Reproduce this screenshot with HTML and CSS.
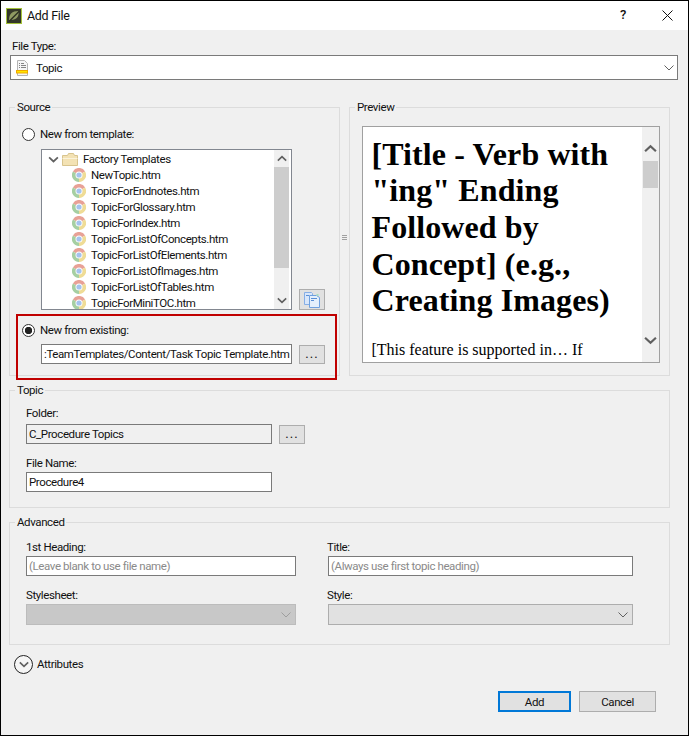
FILE: index.html
```html
<!DOCTYPE html>
<html lang="en">
<head>
<meta charset="utf-8">
<title>Add File</title>
<link rel="stylesheet" href="styles.css">
</head>
<body>
<svg class="defs" width="0" height="0">
  <symbol id="chrome" viewBox="0 0 14 14">
    <path d="M7 7 .9 3.500A7 7 0 0 1 13.100 3.500z" fill="#e8a196"/>
    <path d="M7 7 13.100 3.500A7 7 0 0 1 7 14z" fill="#efdc96"/>
    <path d="M7 7 7 14A7 7 0 0 1 .9 3.500z" fill="#a6cfa2"/>
    <circle cx="7" cy="7" r="3.500" fill="#fdfdfd"/>
    <circle cx="7" cy="7" r="2.600" fill="#a4c3ee"/>
  </symbol>
  <symbol id="chev" viewBox="0 0 12 8">
    <path d="M1 6.500 6 1.800l5 4.700" fill="none" stroke="#606060" stroke-width="2"/>
  </symbol>
  <symbol id="chevd" viewBox="0 0 12 8">
    <path d="M1 1.500 6 6.200l5-4.700" fill="none" stroke="#606060" stroke-width="2"/>
  </symbol>
  <symbol id="thin" viewBox="0 0 10 6">
    <path d="M.5.500 5 5 9.500.5" fill="none" stroke="#606060"/>
  </symbol>
</svg>
<div class="window">
  <header class="titlebar">
    <svg class="appicon" width="16" height="16" viewBox="0 0 16 16">
      <rect x=".5" y=".5" width="15" height="15" fill="#35382a" stroke="#a4c23a"/>
      <path d="M3 12C3 6 6 3 12.500 3c.8 5.500-2 9-7.500 9z" fill="#8f9a62"/>
      <path d="M3 13.500 13.500 3" stroke="#2d3022" stroke-width="1.500"/>
    </svg>
    <span class="title">Add File</span>
    <span class="help">?</span>
    <svg class="close" width="11" height="11" viewBox="0 0 11 11"><path d="M.5.500l10 10m0-10-10 10" stroke="#111" fill="none"/></svg>
  </header>

  <main class="main">
    <div class="label ftlabel">File Type:</div>
    <div class="combo">
      <svg class="topicicon" width="13" height="16" viewBox="0 0 13 16">
        <path d="M1.500.5h7l3 3v12h-10z" fill="#f6f6f6" stroke="#b4b4b4"/>
        <path d="M3 3h1v1H3zm2 0h3v1H5zM3 5h1v1H3zm2 0h5v1H5zM3 7h1v1H3zm2 0h5v1H5z" fill="#858585"/>
        <rect x=".5" y="10.500" width="11" height="2.500" fill="#ffe600" stroke="#f0a800"/>
      </svg>
      <span class="combotext">Topic</span>
      <svg class="comboarrow" width="10" height="6"><use href="#thin"/></svg>
    </div>

    <div class="upper">
      <fieldset class="group source">
        <legend>Source</legend>
        <div class="radiorow">
          <span class="radio"></span><span>New from template:</span>
        </div>
        <div class="treerow">
          <div class="tree">
            <div class="treelist">
              <div class="treeroot">
                <svg class="rootchev" width="11" height="7"><use href="#chevd"/></svg>
                <svg class="folder" width="16" height="13" viewBox="0 0 16 13">
                  <path d="M.5 2.500h5l1-2h5l1 2h3v10H.5z" fill="#f3e2b4" stroke="#d8c48e"/>
                  <path d="M.5 5.500h15" stroke="#fbf3da"/>
                </svg>
                <span>Factory Templates</span>
              </div>
              <div class="file"><svg class="ficon"><use href="#chrome"/></svg><span>NewTopic.htm</span></div>
              <div class="file"><svg class="ficon"><use href="#chrome"/></svg><span>TopicForEndnotes.htm</span></div>
              <div class="file"><svg class="ficon"><use href="#chrome"/></svg><span>TopicForGlossary.htm</span></div>
              <div class="file"><svg class="ficon"><use href="#chrome"/></svg><span>TopicForIndex.htm</span></div>
              <div class="file"><svg class="ficon"><use href="#chrome"/></svg><span>TopicForListOfConcepts.htm</span></div>
              <div class="file"><svg class="ficon"><use href="#chrome"/></svg><span>TopicForListOfElements.htm</span></div>
              <div class="file"><svg class="ficon"><use href="#chrome"/></svg><span>TopicForListOfImages.htm</span></div>
              <div class="file"><svg class="ficon"><use href="#chrome"/></svg><span>TopicForListOfTables.htm</span></div>
              <div class="file"><svg class="ficon"><use href="#chrome"/></svg><span>TopicForMiniTOC.htm</span></div>
            </div>
            <div class="vscroll treescroll">
              <svg class="arrow" width="10" height="7"><use href="#chev"/></svg>
              <div class="track"><div class="thumb treethumb"></div></div>
              <svg class="arrow" width="10" height="7"><use href="#chevd"/></svg>
            </div>
          </div>
          <button class="btn iconbtn" type="button">
            <svg width="16" height="16" viewBox="0 0 16 16">
              <path d="M.5.500h7l1 1v11h-8z" fill="#d8e6fa" stroke="#86aee6"/>
              <path d="M5.500 3.500h7l3 2v10h-10z" fill="#e4effc" stroke="#6fa0de"/>
              <path d="M2 3h3v1H2zm5 3h6v1H7zm0 2h3v1H7z" fill="#5a8fd6"/>
              <path d="M12.500 2h2v2h-2z" fill="#a8dcc0"/>
            </svg>
          </button>
        </div>
        <div class="highlight">
          <div class="radiorow inner">
            <span class="radio checked"></span><span>New from existing:</span>
          </div>
          <div class="pathrow">
            <div class="field path">:TeamTemplates/Content/Task Topic Template.htm</div>
            <button class="btn dots" type="button">...</button>
          </div>
        </div>
      </fieldset>

      <div class="splitter"><svg width="5" height="5" viewBox="0 0 5 5"><path d="M0 .500h5M0 2.500h5M0 4.500h5" stroke="#a0a0a0"/></svg></div>

      <fieldset class="group preview">
        <legend>Preview</legend>
        <div class="previewbox">
          <div class="doc">
            <h1 class="doctitle">[Title - Verb with "ing" Ending Followed by Concept] (e.g., Creating Images)</h1>
            <p class="docbody">[This feature is supported in… If</p>
          </div>
          <div class="vscroll docscroll">
            <svg class="arrow big" width="13" height="9"><use href="#chev"/></svg>
            <div class="track"><div class="thumb docthumb"></div></div>
            <svg class="arrow bigd" width="13" height="9"><use href="#chevd"/></svg>
          </div>
        </div>
      </fieldset>
    </div>

    <fieldset class="group topic">
      <legend>Topic</legend>
      <div class="label">Folder:</div>
      <div class="folderrow">
        <div class="field readonly">C_Procedure Topics</div>
        <button class="btn dots" type="button">...</button>
      </div>
      <div class="label namelabel">File Name:</div>
      <div class="field name">Procedure4</div>
    </fieldset>

    <fieldset class="group advanced">
      <legend>Advanced</legend>
      <div class="advgrid">
        <div class="advcol">
          <div class="label">1st Heading:</div>
          <div class="field hint">(Leave blank to use file name)</div>
          <div class="label advlabel2">Stylesheet:</div>
          <div class="select disabled"><svg width="10" height="6"><use href="#thin"/></svg></div>
        </div>
        <div class="advcol wide">
          <div class="label">Title:</div>
          <div class="field hint">(Always use first topic heading)</div>
          <div class="label advlabel2">Style:</div>
          <div class="select"><svg width="10" height="6"><use href="#thin"/></svg></div>
        </div>
      </div>
    </fieldset>

    <div class="attrs">
      <span class="circle"><svg width="10" height="7"><use href="#chevd"/></svg></span>
      <span>Attributes</span>
    </div>

    <div class="actions">
      <button class="btn action primary" type="button">Add</button>
      <button class="btn action cancel" type="button">Cancel</button>
    </div>
  </main>
</div>
</body>
</html>
```

FILE: styles.css
```css
* { box-sizing: border-box; }
html, body { margin: 0; padding: 0; }
body {
  width: 689px;
  height: 736px;
  overflow: hidden;
  font-family: Roboto, "Open Sans", sans-serif;
  font-size: 11.500px;
  letter-spacing: -.4px;
  line-height: 16px;
  color: #111;
}
.defs { position: absolute; }
.window {
  width: 689px;
  height: 736px;
  border: 1px solid #000;
  background: #f0f0f0;
}
.titlebar {
  height: 29px;
  background: #fff;
  display: flex;
  align-items: center;
  padding-left: 5px;
}
.appicon { flex: none; }
.title { margin-left: 5px; font-size: 12.500px; letter-spacing: -.3px; }
.help { margin-left: auto; font-size: 13px; font-weight: 500; margin-right: 36px; margin-top: -2px; }
.close { margin-right: 15px; margin-top: -1px; }

.main { padding: 8px 0 0 8px; width: 680px; }
.label { height: 16px; white-space: nowrap; }
.ftlabel { margin-left: 3px; }
.combo {
  margin: 1px 0 0 1px;
  width: 668px;
  height: 25px;
  background: #fff;
  border: 1px solid #7a7a7a;
  display: flex;
  align-items: center;
  padding-left: 5px;
}
.combotext { margin-left: 7px; }
.comboarrow { margin-left: auto; margin-right: 3px; }

.group {
  margin: 0;
  padding: 0;
  min-width: 0;
  border: 1px solid #dcdcdc;
  position: relative;
}
.group legend {
  margin-left: -7px;
  padding: 0 2px;
  height: 16px;
  line-height: 16px;
}
.upper {
  margin-top: 19px;
  display: grid;
  grid-template-columns: 331px 9px 321px;
  height: 277px;
}
.source { padding: 11px 0 0 12px; height: 277px; }
.preview { padding: 11px 0 0 12px; height: 277px; }
.splitter { display: flex; justify-content: center; align-items: flex-start; padding-top: 136px; }
.splitter svg { display: block; }

.radiorow { display: flex; align-items: center; height: 16px; gap: 5px; white-space: nowrap; }
.radio {
  width: 13px;
  height: 13px;
  border: 1px solid #333;
  border-radius: 50%;
  background: #fff;
  flex: none;
  position: relative;
}
.radio.checked { background: radial-gradient(circle, #222 0 3.4px, #fff 4px); }

.treerow { display: flex; align-items: flex-end; gap: 7px; margin: 7px 0 0 19px; }
.tree {
  width: 251px;
  height: 161px;
  border: 1px solid #828790;
  background: #fff;
  display: flex;
  overflow: hidden;
}
.treelist { flex: 1; min-width: 0; overflow: hidden; }
.treeroot { display: flex; align-items: center; height: 16px; margin-top: 1px; padding-left: 6px; }
.rootchev { flex: none; }
.folder { margin-left: 3px; flex: none; }
.treeroot span { margin-left: 5px; white-space: nowrap; }
.file { display: flex; align-items: center; height: 16px; padding-left: 30px; gap: 5px; white-space: nowrap; }
.ficon { width: 14px; height: 14px; flex: none; }

.vscroll { background: #f0f0f0; display: flex; flex-direction: column; align-items: center; flex: none; }
.treescroll { width: 15px; margin-right: 2px; }
.docscroll { width: 17px; }
.arrow { flex: none; margin: 5px 0; }
.track { flex: 1; width: 100%; }
.thumb { background: #cdcdcd; width: 100%; }
.treethumb { height: 101px; }
.docthumb { height: 27px; width: 15px; margin: 0 auto; }
.arrow.big { margin: 17px 0 8px; }
.arrow.bigd { margin: 0 0 17px; }

.btn {
  font: inherit;
  letter-spacing: inherit;
  color: #111;
  background: #e1e1e1;
  border: 1px solid #adadad;
  padding: 0;
  margin: 0;
}
.iconbtn { width: 26px; height: 21px; display: flex; align-items: center; justify-content: center; flex: none; }
.iconbtn svg { display: block; }
.dots { width: 26px; height: 19px; flex: none; line-height: 14px; font-size: 13px; letter-spacing: 1px; }

.highlight {
  width: 321px;
  height: 66px;
  margin: 4px 0 0 -6px;
  border: 2px solid #c00000;
  padding: 6px 0 0 4px;
}
.pathrow { display: flex; align-items: center; gap: 7px; margin: 6px 0 0 19px; }
.field {
  height: 20px;
  border: 1px solid #7a7a7a;
  background: #fff;
  padding-left: 2px;
  line-height: 18px;
  white-space: nowrap;
  overflow: hidden;
}
.path { width: 251px; flex: none; }
.readonly { background: #f0f0f0; width: 246px; flex: none; }
.name { width: 246px; margin-top: 1px; }
.hint { color: #8a8a8a; }

.previewbox {
  width: 298px;
  height: 237px;
  border: 1px solid #a0a0a0;
  background: #fff;
  display: flex;
  overflow: hidden;
}
.doc { flex: 1; min-width: 0; overflow: hidden; padding-left: 8.500px; font-family: "Liberation Serif", serif; color: #000; letter-spacing: 0; }
.doctitle { margin: 8.500px 0 0; font-size: 32px; line-height: 36.700px; font-weight: 700; letter-spacing: .1px; }
.docbody { margin: 21.500px 0 0; font-size: 16px; line-height: 18px; white-space: nowrap; }

.topic { margin-top: 6px; height: 126px; width: 661px; padding: 7px 0 0 16px; }
.topic legend, .advanced legend { margin-left: -11px; }
.folderrow { display: flex; align-items: center; gap: 7px; margin-top: 3px; }
.namelabel { margin-top: 11px; }

.advanced { margin-top: 6px; height: 131px; width: 661px; padding: 9px 0 0 16px; }
.advgrid { display: grid; grid-template-columns: 270px 305px; column-gap: 32px; }
.advcol .field { margin-top: 1px; }
.advcol.wide .label { margin-left: -1px; }
.advlabel2 { margin-top: 11px; }
.select {
  margin-top: 1px;
  height: 21px;
  border: 1px solid #adadad;
  background: #e1e1e1;
  display: flex;
  align-items: center;
  justify-content: flex-end;
  padding-right: 4px;
}
.select.disabled { background: #c8c8c8; border-color: #bcbcbc; }
.select.disabled svg { opacity: .4; }

.attrs { display: flex; align-items: center; gap: 4px; height: 20px; margin: 9px 0 0 5px; }
.circle {
  width: 19px;
  height: 19px;
  border: 1px solid #222;
  border-radius: 50%;
  background: #f5f5f5;
  display: flex;
  align-items: center;
  justify-content: center;
}
.actions { display: flex; justify-content: flex-end; gap: 8px; margin-top: 17px; width: 647px; }
.action { height: 21px; }
.primary { width: 73px; border: 2px solid #0078d7; }
.cancel { width: 77px; }
```
